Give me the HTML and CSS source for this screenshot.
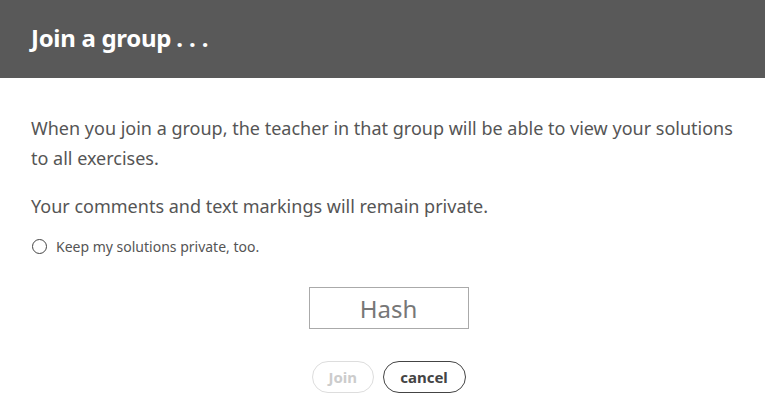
FILE: index.html
```html
<!DOCTYPE html>
<html>
<head>
<meta charset="utf-8">
<link rel="stylesheet" href="styles.css">
</head>
<body>
<div class="dialog">
  <header class="head"><h1 class="title">Join a group<span class="dots">...</span></h1></header>
  <main class="content">
    <p class="para">When you join a group, the teacher in that group will be able to view your solutions to all exercises.</p>
    <p class="para para-2">Your comments and text markings will remain private.</p>
    <label class="check"><span class="radio"></span>Keep my solutions private, too.</label>
    <div class="field-row"><input class="hash" type="text" placeholder="Hash"></div>
    <div class="buttons">
      <button class="btn btn-join">Join</button>
      <button class="btn btn-cancel">cancel</button>
    </div>
  </main>
</div>
</body>
</html>
```
FILE: styles.css
```css
html, body { margin: 0; padding: 0; background: #fff; }
body { font-family: "Noto Sans", "Open Sans", sans-serif; color: #555; }
.head { background: #595959; height: 78px; display: flex; align-items: center; padding: 0 31px; box-sizing: border-box; }
.title { margin: 0; color: #fff; font-size: 24px; font-weight: 700; letter-spacing: -0.3px; padding-bottom: 4px; }
.dots { letter-spacing: 6px; margin-left: 5px; }
.content { padding: 35px 31px 0 31px; }
.para { margin: 0; font-size: 18px; line-height: 30px; color: #555; }
.para-2 { margin-top: 18px; }
.check { display: flex; align-items: center; font-size: 14px; margin-top: 16px; color: #555; }
.radio { width: 13px; height: 13px; border: 1px solid #444; border-radius: 50%; margin: 0 9px 0 1px; }
.field-row { display: flex; justify-content: center; margin-top: 31px; padding-left: 12px; }
.hash { width: 160px; height: 42px; box-sizing: border-box; border: 1px solid #aaa; font: 24px "Noto Sans", sans-serif; text-align: center; color: #777; outline: none; }
.hash::placeholder { color: #777; }
.buttons { display: flex; justify-content: center; gap: 9px; margin-top: 32px; padding-left: 12px; }
.btn { height: 32px; border-radius: 16px; background: #fff; font: 700 15px "Noto Sans", sans-serif; padding: 0 16px; }
.btn-join { border: 1px solid #ddd; color: #ccc; width: 62px; }
.btn-cancel { border: 1px solid #444; color: #444; width: 83px; }
```
